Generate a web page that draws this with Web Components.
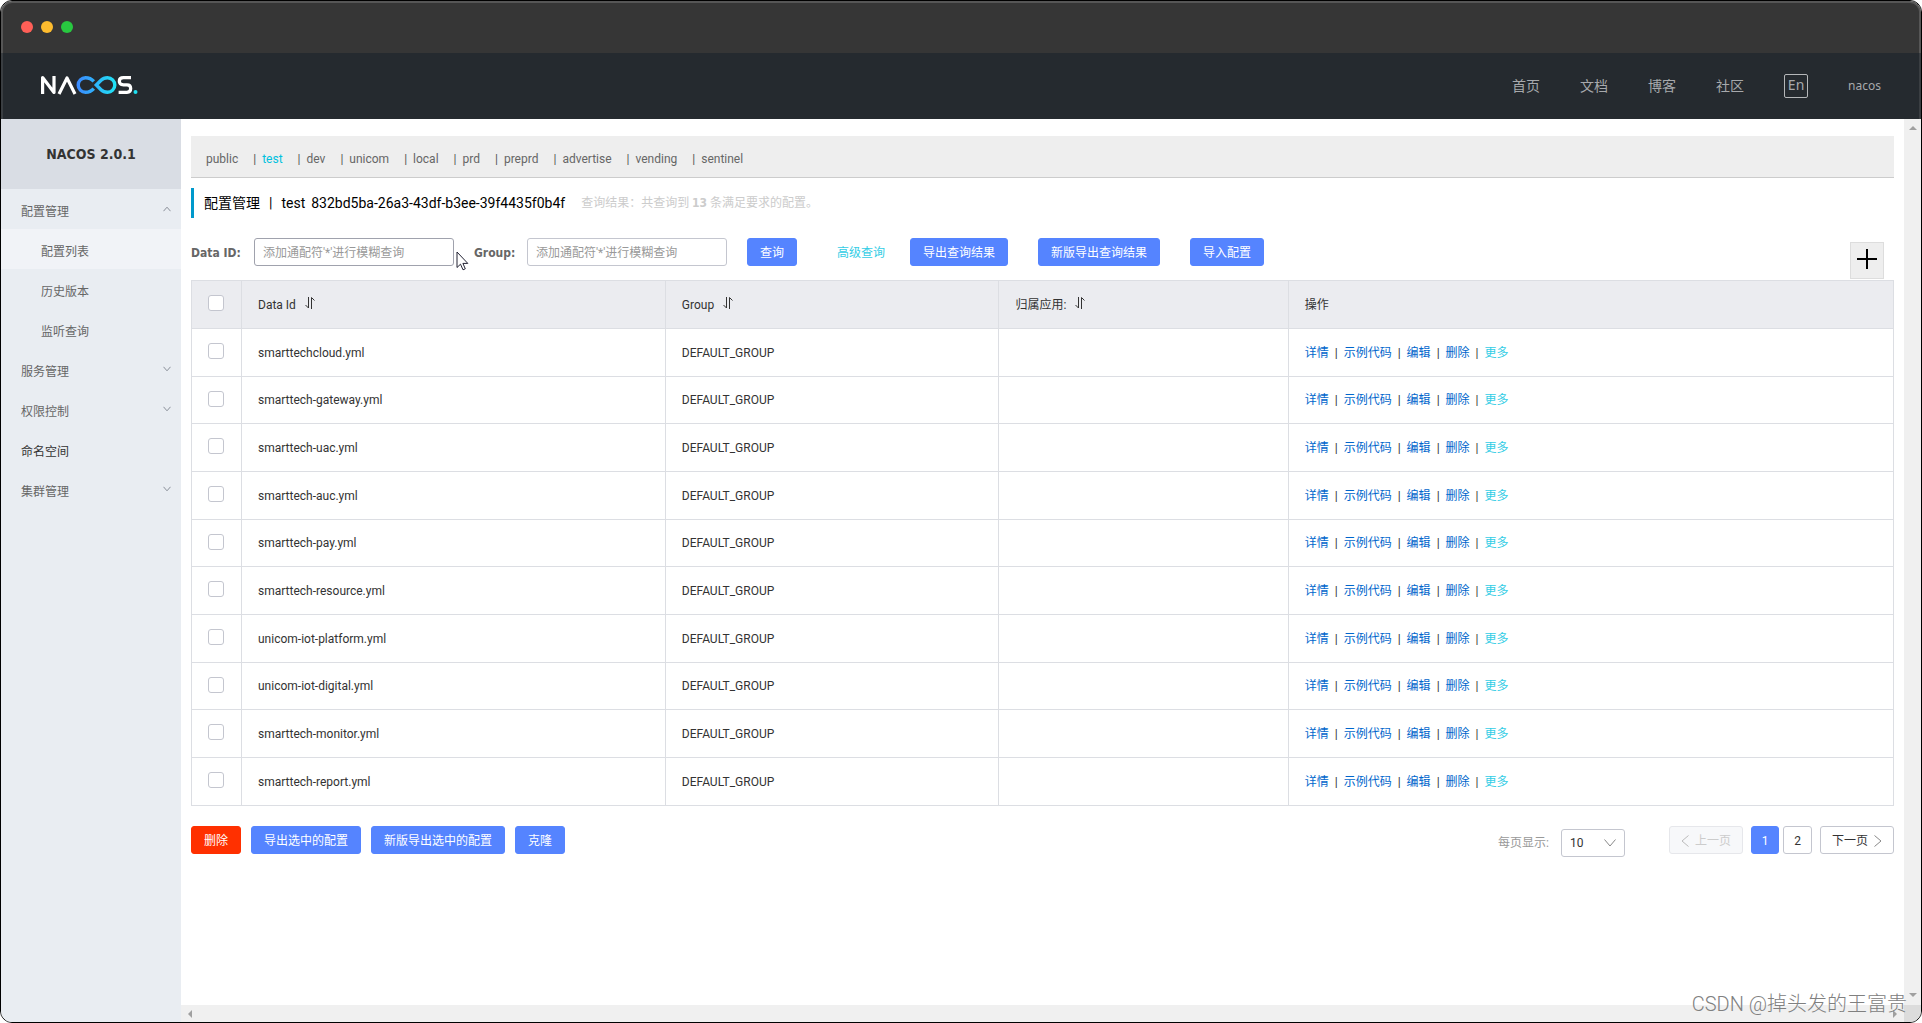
<!DOCTYPE html>
<html lang="zh-CN">
<head>
<meta charset="utf-8">
<title>Nacos</title>
<style>
html,body{margin:0;height:100%}
body{background:#fff;font:12px/18px Roboto,"Noto Sans CJK SC",sans-serif;color:#333;--bold:"DejaVu Sans Condensed","Noto Sans CJK SC",sans-serif}
</style>
</head>
<body>
<nacos-window></nacos-window>
<script>
const make = (name, css, html) => {
  customElements.define(name, class extends HTMLElement {
    connectedCallback() {
      if (this.shadowRoot) return;
      const root = this.attachShadow({mode: 'open'});
      const t = document.createElement('template');
      t.innerHTML = `<style>*{box-sizing:border-box}a{text-decoration:none;color:inherit}button,input,select{font:inherit;margin:0}${css}</style>${typeof html === 'function' ? html(this) : html}`;
      root.append(t.content.cloneNode(true));
    }
  });
};

make('nacos-button', `
:host{display:inline-flex}
button{height:28px;padding:1px 12px 0;border:1px solid #5584ff;border-radius:3px;background:#5584ff;color:#fff;line-height:18px;white-space:nowrap}
:host([kind=danger]) button{background:#ff3000;border-color:#ff3000}
`, '<button type="button"><slot></slot></button>');

make('nacos-logo', `:host{display:block;width:98px;height:22px}svg{display:block}`, `
<svg width="98" height="20" viewBox="0 0 98 20" fill="none" role="img" aria-label="Nacos">
<defs><linearGradient id="g" gradientUnits="userSpaceOnUse" x1="36" y1="0" x2="77" y2="0"><stop stop-color="#3c86ff"/><stop offset="1" stop-color="#1fe6f5"/></linearGradient></defs>
<g stroke="#fff" stroke-width="3.2" stroke-linejoin="round">
<path d="M2.600 19V2.600L14 17.400V1"/><path d="M19 19L27 3L35 19"/>
<path d="M91 2.700H83.500Q79.300 2.700 79.300 6.200T83.500 9.800H87Q90.700 9.800 90.700 13.500T87 17.300H78.600"/></g>
<path stroke="url(#g)" stroke-width="3.4" d="M53.800 6.400Q50.500 2.700 45.500 2.700A7.300 7.300 0 0 0 45.500 17.300Q50.500 17.300 53.800 13.600M56.300 10L61 5.200Q63.500 2.700 67.500 2.700A7.300 7.300 0 0 1 67.500 17.300Q63.500 17.300 61 14.800Z"/>
<circle cx="95.500" cy="17" r="2" fill="#1fe0f0"/></svg>`);

make('nacos-titlebar', `
:host{display:flex;align-items:center;gap:8px;height:52px;padding:0 18px 2px;background:#363636;border:2px solid #565656;border-bottom:0;border-radius:11px 11px 0 0}
i{width:12px;height:12px;border-radius:50%;background:var(--c)}
`, `<i style="--c:#ff5f57"></i><i style="--c:#febc2e"></i><i style="--c:#28c840"></i>`);

make('nacos-header', `
:host{display:flex;align-items:center;justify-content:space-between;height:66px;padding:0 38px 0 37px;background:#252a2f;border:solid #3a3e42;border-width:0 2px;color:#a7a9ac}
nav{display:flex;align-items:center;gap:40px;font-size:14px}
.lang{width:24px;height:24px;border:1px solid #b5b7b9;border-radius:2px;text-align:center;line-height:20px;font-family:"Noto Sans",sans-serif}
.user{font-size:12px;font-family:"Noto Sans",sans-serif}
`, `<nacos-logo></nacos-logo><nav><a href="#">首页</a><a href="#">文档</a><a href="#">博客</a><a href="#">社区</a><a href="#" class="lang">En</a><a href="#" class="user">nacos</a></nav>`);

make('nacos-menu-item', `
:host{display:block}
a{display:flex;align-items:center;justify-content:space-between;height:40px;padding:6px 10px 0 20px;color:#666}
:host([child]) a{padding-left:40px}
:host([selected]) a{background:#f1f3f7}
:host([dark]) a{color:#333}
svg{display:none;fill:none;stroke:#8a8f99}
:host([arrow]) svg{display:block;margin-top:-6px}
:host([arrow=up]) svg{transform:rotate(180deg)}
`, `<a href="#"><slot></slot><svg width="8" height="6" viewBox="0 0 8 6"><path d="M.5 .8L4 4.8L7.500 .8"/></svg></a>`);

make('nacos-sidebar', `
:host{display:block;width:180px;flex:none;background:#e9edf2}
h1{margin:0;height:70px;background:#d9dde4;font:bold 14px/70px var(--bold);text-align:center;color:#333}
nav{display:block}
`, `<h1>NACOS 2.0.1</h1><nav>
<nacos-menu-item arrow="up">配置管理</nacos-menu-item>
<nacos-menu-item child selected>配置列表</nacos-menu-item>
<nacos-menu-item child>历史版本</nacos-menu-item>
<nacos-menu-item child>监听查询</nacos-menu-item>
<nacos-menu-item arrow="down">服务管理</nacos-menu-item>
<nacos-menu-item arrow="down">权限控制</nacos-menu-item>
<nacos-menu-item dark>命名空间</nacos-menu-item>
<nacos-menu-item arrow="down">集群管理</nacos-menu-item></nav>`);

const spaces = ['public','test','dev','unicom','local','prd','preprd','advertise','vending','sentinel'];
make('nacos-namespaces', `
:host{display:flex;height:42px;padding:4px 15px 0;background:#eee;border-bottom:1px solid #ccc;align-items:center;color:#666}
span{display:flex}
span+span::before{content:"|";margin:0 6px 0 15px;color:#555}
.on{color:#00c1de}
`, spaces.map(s => `<span><a href="#"${s === 'test' ? ' class="on"' : ''}>${s}</a></span>`).join(''));

make('nacos-title', `
:host{display:flex;align-items:center;height:30px;margin-top:10px;padding-left:10px;border-left:3px solid #09c;color:#000}
h2{display:flex;margin:0;font-size:14px;font-weight:400}
i{font-style:normal;margin:0 9px}
span{margin-left:6px}
p{margin:0 0 0 16px;color:#ccc}
b{font-family:var(--bold)}
`, `<h2>配置管理<i>|</i>test<span>832bd5ba-26a3-43df-b3ee-39f4435f0b4f</span></h2><p>查询结果：共查询到 <b>13</b> 条满足要求的配置。</p>`);

make('nacos-search', `
:host{display:flex;position:relative;align-items:center;margin-top:20px;height:28px}
form{display:flex;align-items:center}
label{font:bold 12px/18px var(--bold);color:#666;width:63px;padding-top:2px}
label+input+label{width:53px;margin-left:20px}
input{width:200px;height:28px;border:1px solid #c4c6cf;border-radius:3px;padding:2px 8px 0;background:#fff;outline:0}
input.hover{border-color:#a0a2ad}
input::placeholder{color:#999;opacity:1}
.q{margin-left:20px}
.adv{color:#33cde5;margin:0 25px 0 40px;padding-top:2px}
.ex{margin-right:30px}
.add{position:absolute;right:10px;top:4px;width:34px;height:37px;border:1px solid #ddd;background:#eee;padding:0}
.add svg{display:block;margin:6px auto 10px;stroke:#000;stroke-width:2}
.cur{position:absolute;left:265px;top:13px}
`, `<form><label for="d">Data ID:</label><input id="d" class="hover" placeholder="添加通配符'*'进行模糊查询"><label for="g">Group:</label><input id="g" placeholder="添加通配符'*'进行模糊查询"></form>
<nacos-button class="q">查询</nacos-button><a href="#" class="adv">高级查询</a>
<nacos-button class="ex">导出查询结果</nacos-button><nacos-button class="ex">新版导出查询结果</nacos-button><nacos-button>导入配置</nacos-button>
<button class="add" type="button" aria-label="新建配置"><svg width="20" height="20"><path d="M0 10H20M10 0V20"/></svg></button>
<svg class="cur" width="13" height="20" viewBox="0 0 13 20"><path d="M1 1V16.500L4.500 13.200L7 18.800L9.300 17.800L6.900 12.400H11.800Z" fill="#fff" stroke="#223"/></svg>`);

const rows = ['smarttechcloud','smarttech-gateway','smarttech-uac','smarttech-auc','smarttech-pay','smarttech-resource','unicom-iot-platform','unicom-iot-digital','smarttech-monitor','smarttech-report'];
const sort = `<svg class="sort" width="12" height="14" viewBox="0 0 12 14"><path d="M4.500 1V12L1.500 9M7.500 13V1.500L10.500 4.500"/></svg>`;
make('nacos-table', `
:host{display:block;margin-top:14px}
table{width:100%;table-layout:fixed;border-collapse:collapse}
th,td{border:1px solid #dcdee3;padding:0 16px;text-align:left;font-weight:400;color:#333;height:48px}
th{background:#ebecf0}
tbody tr:nth-child(3n+2) td{height:47px}
th.c,td.c{width:50px;text-align:center;padding:0 1px 0 0}.i{width:24.9%}.g{width:19.6%}.a{width:17%}
input{appearance:none;display:block;width:16px;height:16px;margin:0 auto 3px;border:1px solid #c4c6cf;border-radius:3px;background:#fff}
.sort{vertical-align:-1px;margin-left:8px;fill:none;stroke:#333}
td a{color:#06c}td a.more{color:#33cde5}
.bar{margin:0 6px}
`, `<table><thead><tr><th class="c"><input type="checkbox" aria-label="全选"></th><th class="i">Data Id${sort}</th><th class="g">Group${sort}</th><th class="a">归属应用:${sort}</th><th>操作</th></tr></thead><tbody>${rows.map(r => `<tr><td class="c"><input type="checkbox" aria-label="${r}"></td><td>${r}.yml</td><td>DEFAULT_GROUP</td><td></td><td>${['详情','示例代码','编辑','删除'].map(a => `<a href="#">${a}</a><span class="bar">|</span>`).join('')}<a href="#" class="more">更多</a></td></tr>`).join('')}</tbody></table>`);

make('nacos-pager', `
:host{display:flex;align-items:flex-start}
.size{display:flex;align-items:center;margin-top:3px;color:#999}
.box{position:relative;margin-left:12px}
select{appearance:none;display:block;width:64px;height:28px;border:1px solid #c4c6cf;border-radius:3px;padding:0 8px;background:#fff;color:#333}
.box svg{position:absolute;right:9px;top:10px;pointer-events:none}
svg{fill:none;stroke:#888;stroke-width:1}
nav{display:flex;margin-left:44px}
nav button{height:28px;min-width:29px;padding:1px 0 0;border:1px solid #c4c6cf;border-radius:3px;background:#fff;color:#333}
nav .step{width:74px;display:flex;align-items:center;justify-content:center;gap:6px}
nav .step:disabled{background:#f7f8fa;border-color:#e6e7eb;color:#ccc}
:disabled svg{stroke:#bbb}
nav .on{margin:0 4px 0 8px;width:28px;min-width:28px;background:#5584ff;border-color:#5584ff;color:#fff}
.n{margin-right:8px}
`, `<div class="size"><label for="s">每页显示:</label><span class="box"><select id="s"><option>10</option></select><svg width="12" height="8"><path d="M.5 .5L6 7L11.500 .5"/></svg></span></div>
<nav><button class="step" disabled><svg width="8" height="12"><path d="M7.500 .5L1 6L7.500 11.500"/></svg>上一页</button><button class="on">1</button><button class="n">2</button><button class="step">下一页<svg width="8" height="12"><path d="M.5 .5L7 6L.5 11.500"/></svg></button></nav>`);

make('nacos-footer', `
:host{display:flex;justify-content:space-between;margin-top:20px}
div{display:flex;gap:10px}
`, `<div><nacos-button kind="danger">删除</nacos-button><nacos-button>导出选中的配置</nacos-button><nacos-button>新版导出选中的配置</nacos-button><nacos-button>克隆</nacos-button></div><nacos-pager></nacos-pager>`);

make('nacos-scrollbar', `
:host{display:flex;justify-content:space-between;background:#f0f0f0}
:host([dir=v]){flex-direction:column;width:17px;align-items:center;padding:6px 0 7px}
:host([dir=h]){height:17px;align-items:center;padding:0 6px}
svg{fill:#a0a0a0;display:block}
`, e => e.getAttribute('dir') === 'v'
  ? `<svg width="8" height="5"><path d="M0 5L4 1L8 5Z"/></svg><svg width="8" height="5"><path d="M0 0L4 4L8 0Z"/></svg>`
  : `<svg width="5" height="8"><path d="M5 0L1 4L5 8Z"/></svg><svg width="5" height="8"><path d="M0 0L4 4L0 8Z"/></svg>`);

make('nacos-window', `
:host{display:flex;flex-direction:column;height:100vh;box-sizing:border-box;border:1px solid #000;border-radius:12px;overflow:hidden;position:relative}
.body{display:flex;flex:1;min-height:0}
.view{flex:1;min-width:0;display:grid;grid-template:1fr 17px/1fr 17px}
main{padding:17px 10px 0;min-width:0;overflow:hidden}
.corner{background:#dcdcdc}
.mark{position:absolute;right:14px;bottom:4px;font-size:20px;line-height:28px;font-weight:300;color:#808080}
`, `<nacos-titlebar></nacos-titlebar><nacos-header></nacos-header>
<div class="body"><nacos-sidebar></nacos-sidebar><div class="view"><main><nacos-namespaces></nacos-namespaces><nacos-title></nacos-title><nacos-search></nacos-search><nacos-table></nacos-table><nacos-footer></nacos-footer></main><nacos-scrollbar dir="v"></nacos-scrollbar><nacos-scrollbar dir="h"></nacos-scrollbar><div class="corner"></div></div></div>
<div class="mark">CSDN @掉头发的王富贵</div>`);
</script>
</body>
</html>
